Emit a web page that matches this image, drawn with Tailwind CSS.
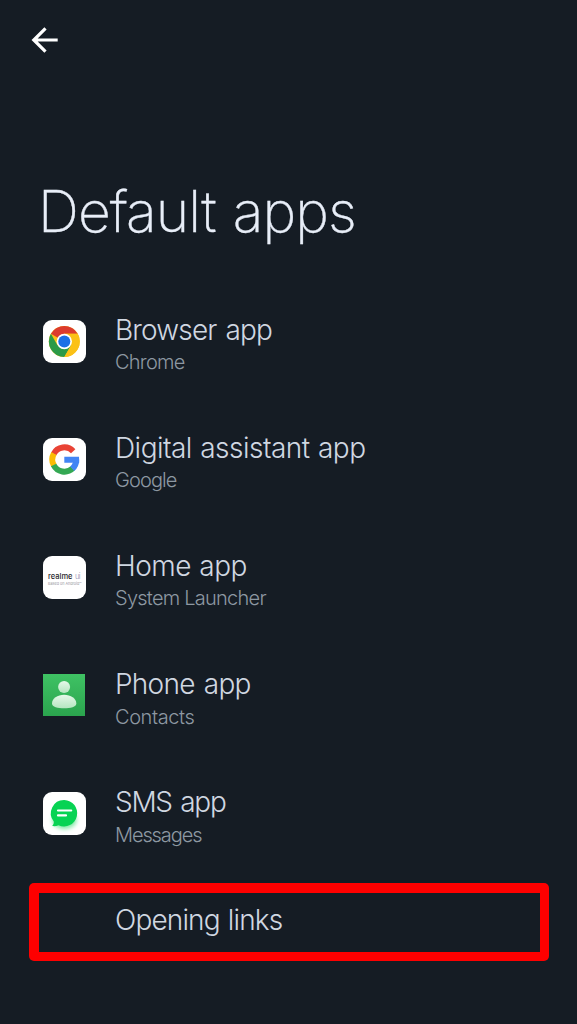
<!DOCTYPE html>
<html lang="en">
<head>
<meta charset="utf-8">
<title>Default apps</title>
<script src="https://cdn.jsdelivr.net/npm/@tailwindcss/browser@4"></script>
</head>
<body class="bg-[#151c24] font-['Inter',sans-serif] text-[#d0d7e1]">
<main class="flex h-[1024px] w-[577px] flex-col overflow-hidden">
  <header class="flex h-20 shrink-0 items-center pl-[31px]">
    <svg class="h-7 w-7" viewBox="0 0 28 28" fill="none" stroke="#fff" stroke-width="3.2"><path d="M26.7 14H3M14.5 2.3 2.8 14l11.7 11.7"/></svg>
  </header>
  <h1 class="mt-[97px] pl-[38px] text-[57px] leading-[70px] font-extralight tracking-[-0.95px] [word-spacing:2px] whitespace-nowrap text-[#e8eef8] [-webkit-text-stroke:0.35px_#e8eef8]">Default apps</h1>
  <ul class="mt-[35px] flex flex-col">
    <li class="flex h-[118.2px] pl-[43px]">
      <svg class="mt-[37.5px] h-[43px] w-[43px] shrink-0" viewBox="0 0 43 43"><rect width="43" height="43" rx="9" fill="#fff"/><circle cx="21.3" cy="21.5" r="15.5" fill="#fbc116"/><path d="M21.3 21.5 7.9 13.75A15.5 15.5 0 0 1 34.7 13.75H21.3Z" fill="#dc3b2e"/><path d="M7.9 13.75A15.5 15.5 0 0 0 21.3 37L28 25.4 21.3 21.5 14.6 25.4Z" fill="#2b9a48"/><path d="M21.3 21.5 28 25.4 21.3 37A15.5 15.5 0 0 0 34.7 13.75H21.3Z" fill="#fbc116"/><circle cx="21.3" cy="21.5" r="7.7" fill="#fff"/><circle cx="21.3" cy="21.5" r="6" fill="#1a6fe6"/></svg>
      <div class="ml-[29px] pt-[30.5px] whitespace-nowrap"><h2 class="text-[28px] leading-[34px] font-light tracking-[-0.85px] [word-spacing:2px]">Browser app</h2><p class="mt-[2.5px] text-[20px] leading-[26px] font-light tracking-[-0.75px] text-[#8d98a2]">Chrome</p></div>
    </li>
    <li class="flex h-[118.2px] pl-[43px]">
      <svg class="mt-[37.5px] h-[43px] w-[43px] shrink-0" viewBox="0 0 43 43"><rect width="43" height="43" rx="9" fill="#fff"/><g fill="none" stroke-width="6"><path d="M30.2 13.2A12.1 12.1 0 0 0 10.6 16" stroke="#e94335"/><path d="M10.9 15.5A12.1 12.1 0 0 0 10.9 27.5" stroke="#fbbc05"/><path d="M10.6 27A12.1 12.1 0 0 0 29.7 30.4" stroke="#34a853"/><path d="M29.2 30.8A12.1 12.1 0 0 0 33.2 21.5" stroke="#4285f4"/></g><path d="M21.3 18.8H36L36.2 24.7H21.3Z" fill="#4285f4"/></svg>
      <div class="ml-[29px] pt-[30.5px] whitespace-nowrap"><h2 class="text-[28px] leading-[34px] font-light tracking-[-0.52px] [word-spacing:1px]">Digital assistant app</h2><p class="mt-[2.5px] text-[20px] leading-[26px] font-light tracking-[-0.9px] text-[#8d98a2]">Google</p></div>
    </li>
    <li class="flex h-[118.2px] pl-[43px]">
      <svg class="mt-[37.5px] h-[43px] w-[43px] shrink-0" viewBox="0 0 43 43"><rect width="43" height="43" rx="9" fill="#fff"/><text x="5" y="23" font-size="7.6" font-weight="500" textLength="24.5" lengthAdjust="spacingAndGlyphs" fill="#25252b">realme</text><text x="32" y="23" font-size="7.6" font-weight="300" textLength="5.5" fill="#8d8dac">ui</text><text x="5" y="29" font-size="4" textLength="33.5" lengthAdjust="spacingAndGlyphs" fill="#94949c">Based on Android™</text></svg>
      <div class="ml-[29px] pt-[30.5px] whitespace-nowrap"><h2 class="text-[28px] leading-[34px] font-light tracking-[-0.5px] [word-spacing:1px]">Home app</h2><p class="mt-[2.5px] text-[20px] leading-[26px] font-light tracking-[-0.75px] text-[#8d98a2]">System Launcher</p></div>
    </li>
    <li class="flex h-[118.2px] pl-[43px]">
      <svg class="mt-[37.5px] h-[43px] w-[43px] shrink-0" viewBox="0 0 43 43"><defs><linearGradient id="g" x2="0" y2="1"><stop stop-color="#3fc264"/><stop offset="1" stop-color="#2ba44e"/></linearGradient><linearGradient id="p" x2="0" y2="1"><stop stop-color="#e6f8e9"/><stop offset="1" stop-color="#b5e6c0"/></linearGradient></defs><rect width="42" height="42" fill="url(#g)"/><circle cx="21.1" cy="13" r="6" fill="url(#p)"/><path d="M9 29.5C9 24.3 14.5 20.8 21.1 20.8S33.3 24.3 33.3 29.5C33.3 33 27.5 34.3 21.1 34.3S9 33 9 29.5Z" fill="url(#p)"/></svg>
      <div class="ml-[29px] pt-[30.5px] whitespace-nowrap"><h2 class="text-[28px] leading-[34px] font-light tracking-[-0.75px] [word-spacing:2px]">Phone app</h2><p class="mt-[2.5px] text-[20px] leading-[26px] font-light tracking-[-0.4px] text-[#8d98a2]">Contacts</p></div>
    </li>
    <li class="flex h-[118.2px] pl-[43px]">
      <svg class="mt-[37.5px] h-[43px] w-[43px] shrink-0" viewBox="0 0 43 43"><defs><filter id="b" x="-50%" y="-50%" width="200%" height="200%"><feGaussianBlur stdDeviation="2"/></filter></defs><rect width="43" height="43" rx="9" fill="#fff"/><ellipse cx="21.5" cy="28" rx="12" ry="9" fill="#7fe8a4" filter="url(#b)"/><path d="M21.3 8A13.2 13.2 0 1 1 15.5 33.2C13.5 34.2 11.3 34.3 9.2 34 10.6 32.4 11 31 10.8 29.5A13.2 13.2 0 0 1 21.3 8Z" fill="#07d353"/><path d="M15 18.5H28.2M15 23.4H23" stroke="#fff" stroke-width="2.2" stroke-linecap="round"/></svg>
      <div class="ml-[29px] pt-[30.5px] whitespace-nowrap"><h2 class="text-[28px] leading-[34px] font-light tracking-[-1.3px] [word-spacing:2px]">SMS app</h2><p class="mt-[2.5px] text-[20px] leading-[26px] font-light tracking-[-1.1px] text-[#8d98a2]">Messages</p></div>
    </li>
    <li class="mt-[10px] ml-[29px] h-[78.5px] w-[520px] rounded-[5px] bg-[#fe0000] px-[9.5px] pt-[10px] pb-[9.5px]">
      <div class="h-full bg-[#151c24] pt-[10px] pl-[76.5px] whitespace-nowrap"><h2 class="text-[28px] leading-[34px] font-light tracking-[-0.85px] [word-spacing:1px]">Opening links</h2></div>
    </li>
  </ul>
</main>
</body>
</html>
